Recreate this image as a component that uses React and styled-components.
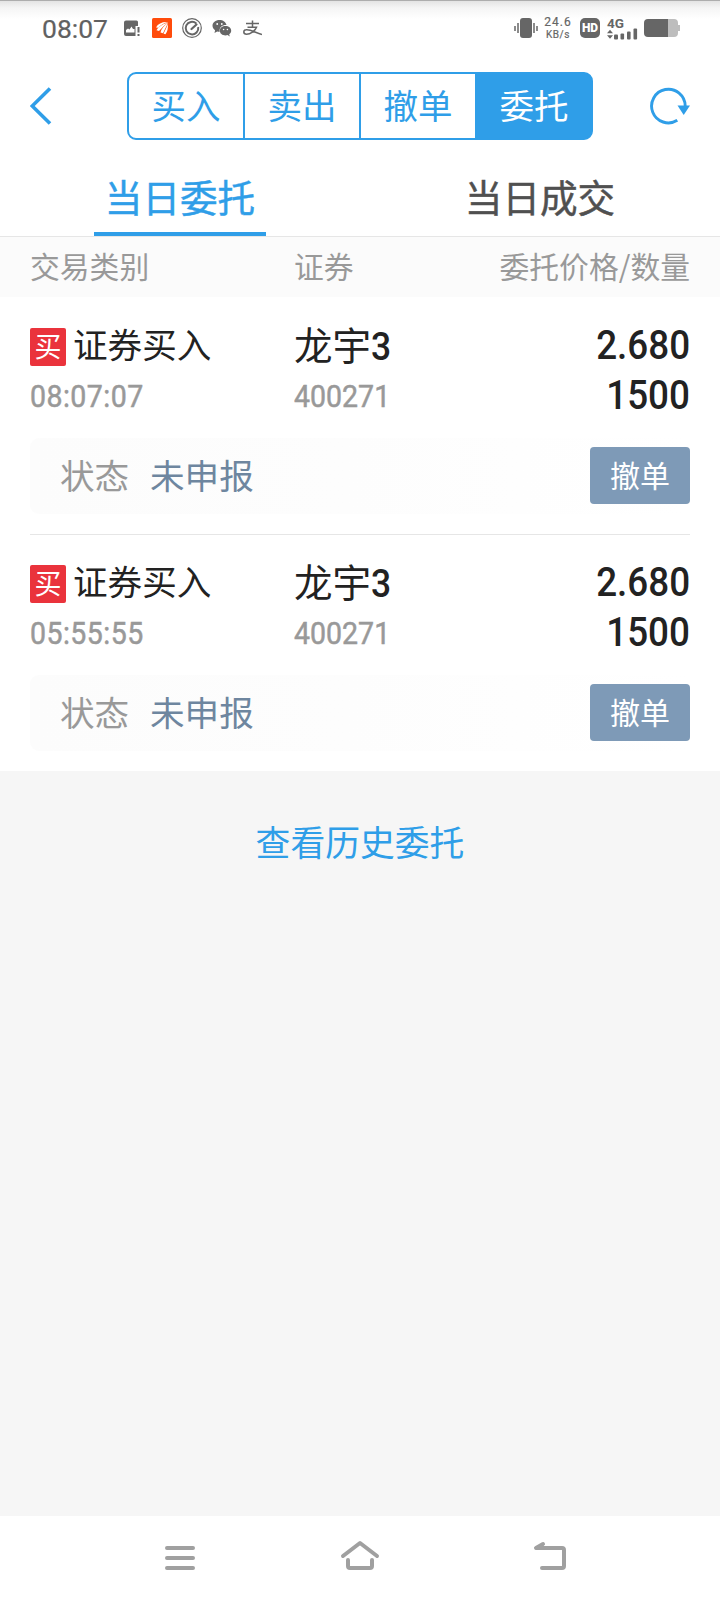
import React from "react";
import styled, { createGlobalStyle } from "styled-components";

const cjk = `"Noto Sans CJK SC", sans-serif`;
const num = `Roboto, "Noto Sans CJK SC", sans-serif`;
const blue = "#2f9ee8";

const Global = createGlobalStyle`
  * { box-sizing: border-box; }
  body { margin: 0; background: #f6f6f6; font-family: ${cjk}; }
  button { font: inherit; padding: 0; border: 0; background: none; color: inherit; }
`;

const Screen = styled.div`
  width: 720px;
  height: 1600px;
  display: flex;
  flex-direction: column;
  background: #f6f6f6;
  overflow: hidden;
`;

const StatusBar = styled.header`
  height: 56px;
  display: flex;
  align-items: flex-start;
  justify-content: space-between;
  padding: 15px 40px 0 42px;
  border-top: 1px solid #adadad;
  background: linear-gradient(#e4e4e4, #f5f5f5 7px, #fff 18px);
`;

const StatusGroup = styled.div`
  display: flex;
  align-items: center;
  height: 24px;
  svg { display: block; flex: none; }
`;

const Clock = styled.span`
  width: 70px;
  padding-top: 2px;
  font: 400 26.5px/24px ${num};
  -webkit-text-stroke: 0.2px #616161;
  color: #616161;
  white-space: nowrap;
`;

const LeftIcons = styled(StatusGroup)`
  gap: 10px;
`;

const Speed = styled.span`
  width: 28px;
  height: 24px;
  margin: 0 8px 0 6px;
  display: flex;
  flex-direction: column;
  align-items: center;
  color: #666;
  font: 400 10px/12px ${num};
  -webkit-text-stroke: 0.2px #666;
`;

const SpeedValue = styled.span`
  font-size: 12px;
  line-height: 13px;
  letter-spacing: 1px;
`;

const SpeedUnit = styled.span`
  letter-spacing: 0.5px;
  line-height: 12px;
`;

const NavBar = styled.nav`
  height: 96px;
  display: flex;
  align-items: flex-start;
  justify-content: space-between;
  padding: 16px 30px 0;
  background: #fff;
`;

const IconButton = styled.button`
  width: 42px;
  height: 68px;
  display: flex;
  align-items: center;
  justify-content: ${(p) => p.$align};
`;

const Segments = styled.div`
  width: 466px;
  height: 68px;
  display: flex;
  border: 2px solid ${blue};
  border-radius: 9px;
  background: ${blue};
`;

const Segment = styled.button`
  flex: 1;
  margin-left: ${(p) => (p.$first ? 0 : 2)}px;
  padding-bottom: 4px;
  border-radius: ${(p) => (p.$first ? "7px 0 0 7px" : "0")};
  background: ${(p) => (p.$active ? "transparent" : "#fff")};
  color: ${(p) => (p.$active ? "#fff" : blue)};
  font-size: 34.5px;
  line-height: 60px;
`;

const Tabs = styled.div`
  height: 85px;
  display: flex;
  background: #fff;
  border-bottom: 1px solid #e6e6e6;
`;

const TabCell = styled.div`
  flex: 1;
  display: flex;
  justify-content: center;
`;

const Tab = styled.button`
  width: 172px;
  height: 84px;
  padding-top: 7px;
  border-bottom: 4px solid ${(p) => (p.$active ? blue : "transparent")};
  color: ${(p) => (p.$active ? blue : "#505050")};
  -webkit-text-stroke: 0.45px ${(p) => (p.$active ? blue : "#505050")};
  font-size: 37.6px;
  line-height: 74px;
`;

const columns = "264px 1fr auto";

const TableHead = styled.div`
  height: 60px;
  display: grid;
  grid-template-columns: ${columns};
  padding: 0 30px;
  background: #fbfbfb;
  color: #999;
  font-size: 29.8px;
  line-height: 57px;
`;

const Orders = styled.main`
  padding: 0 30px;
  background: #fff;
`;

const Order = styled.article`
  height: 237px;
  padding-top: 22px;
  border-top: 1px solid ${(p) => (p.$first ? "transparent" : "#e6e6e6")};
`;

const OrderGrid = styled.div`
  height: 118px;
  display: grid;
  grid-template-columns: ${columns};
  grid-template-rows: 50px 50px;
`;

const Kind = styled.div`
  display: flex;
  align-items: flex-start;
  gap: 7px;
  color: #222;
  font-size: 34.6px;
  line-height: 46px;
`;

const Badge = styled.span`
  width: 36px;
  height: 38px;
  margin-top: 8px;
  border-radius: 2px;
  background: #ea333c;
  color: #fff;
  font-size: 27px;
  line-height: 36px;
  text-align: center;
`;

const Stock = styled.div`
  color: #222;
  font-size: 38.5px;
  line-height: 46px;
`;

const Digits = styled.span`
  display: inline-block;
  font-family: ${num};
  font-weight: 500;
  transform: scaleX(0.92);
  transform-origin: ${(p) => p.$origin || "left"} center;
`;

const Minor = styled.div`
  color: #999;
  font-size: 31px;
  line-height: 48px;
  ${Digits} {
    font-weight: 400;
    letter-spacing: ${(p) => p.$spacing || 0}px;
    -webkit-text-stroke: 0.5px #999;
  }
`;

const Amount = styled.div`
  color: #222;
  font-size: 40px;
  line-height: 45px;
  text-align: right;
`;

const StateBar = styled.div`
  height: 76px;
  display: flex;
  align-items: center;
  padding-left: 30px;
  border-radius: 9px;
  background: linear-gradient(90deg, #fcfcfc, #fdfdfd 48%, #fff);
  font-size: 34.6px;
  line-height: 70px;
`;

const StateLabel = styled.span`
  width: 90px;
  padding-bottom: 4px;
  color: #999;
`;

const StateValue = styled.span`
  flex: 1;
  padding-bottom: 4px;
  color: #6e869f;
`;

const CancelButton = styled.button`
  width: 100px;
  height: 57px;
  margin-bottom: 1px;
  padding-bottom: 3px;
  border-radius: 4px;
  background: #7e9ab7;
  color: #fff;
  font-size: 30px;
  line-height: 54px;
`;

const History = styled.div`
  flex: 1;
  padding-top: 44px;
  text-align: center;
  color: ${blue};
  font-size: 34.8px;
  line-height: 52px;
`;

const SystemNav = styled.footer`
  height: 84px;
  display: grid;
  grid-template-columns: 180px 190px 40px;
  padding: 21px 150px 0 160px;
  background: #fff;
  svg { display: block; }
`;

const ImageIcon = () => (
  <svg width="20" height="20" viewBox="0 0 20 20">
    <path fill="#666" d="M4 2.500h10.500a1.500 1.500 0 0 1 1.500 1.500v4h-2.500v10H4a2 2 0 0 1-2-2v-11.500a2 2 0 0 1 2-2z" />
    <path fill="#fff" d="M4 14.500V12l2-1.500 1.500 1 2-3 1.500 2.500h1.500v3.500z" />
    <path stroke="#666" strokeWidth="2" d="M16.500 9v5.500M16.500 16v2" />
  </svg>
);

const NewsIcon = () => (
  <svg width="20" height="20" viewBox="0 0 20 20">
    <rect width="20" height="20" rx="1.500" fill="#ff4b0b" />
    <g fill="#fff">
      <path d="M4 9.500Q7 3.500 16 4Q9 6 6.500 9.800z" />
      <path d="M4.500 12.200Q8 6.500 16 4.500Q11 8 7 13z" />
      <path d="M8.500 14.500Q10 8.500 16 5Q13.500 10 11 15.200z" />
      <path d="M11.500 15.800Q14.500 10 15.800 6Q16.500 12 13.500 16.300z" />
    </g>
  </svg>
);

const GaugeIcon = () => (
  <svg width="20" height="20" viewBox="0 0 20 20" fill="none" stroke="#666">
    <circle cx="10" cy="10" r="9.300" strokeWidth="1.200" />
    <path strokeWidth="2" d="M14.300 5.500A6.300 6.300 0 1 0 16.200 9" />
    <path strokeWidth="2.200" strokeLinecap="round" d="M9.500 11L14.500 6.500" />
  </svg>
);

const ChatIcon = () => (
  <svg width="20" height="20" viewBox="0 0 20 20">
    <path fill="#666" d="M7.500 2C3.500 2 .5 4.500.5 7.700c0 1.900 1 3.400 2.600 4.500L2.500 15l2.700-1.500c.8.2 1.500.3 2.500.3-.9-4.300 2.700-7 6.800-6.800C13.800 4 11 2 7.500 2z" />
    <path fill="#666" d="M13.500 8c-3.200 0-5.700 2-5.700 4.700 0 2.600 2.500 4.700 5.700 4.700.7 0 1.300-.1 2-.3l2.300 1.300-.6-2.100c1.300-.9 2-2.200 2-3.600C19.200 10 16.700 8 13.500 8z" />
    <g fill="#fff">
      <circle cx="5.200" cy="6" r=".9" />
      <circle cx="9.800" cy="6" r=".9" />
      <circle cx="11.600" cy="11.500" r=".8" />
      <circle cx="15.400" cy="11.500" r=".8" />
    </g>
  </svg>
);

const PayIcon = () => (
  <svg width="20" height="20" viewBox="0 0 20 20" fill="none" stroke="#666" strokeWidth="1.500">
    <path d="M4 5.500h13M10.500 2.500V9M5.500 9.300H14.500C13 13 8.500 16.300 4.500 16.300C1 16 1 12.300 4 11.800C8 11 13 14.500 20 16.500" />
  </svg>
);

const VibrateIcon = () => (
  <svg width="24" height="20" viewBox="0 0 24 20">
    <rect x="6" width="12" height="20" rx="3" fill="#666" />
    <path stroke="#666" strokeWidth="1.500" d="M1 8v5M4 5v10M20 5v10M23 8v5" />
  </svg>
);

const HdBadge = styled.span`
  width: 20px;
  height: 20px;
  border-radius: 5px;
  background: #666;
  color: #fff;
  font: 900 12px/20px ${num};
  text-align: center;
`;

const Network = styled.span`
  width: 32px;
  height: 22px;
  margin: 0 5px 0 7px;
  font: 700 13.5px/12px ${num};
  color: #666;
  svg { margin-top: -1px; }
`;

const SignalIcon = () => (
  <svg width="32" height="12" viewBox="0 0 32 12" fill="#666">
    <path d="M0 5.200L3 1.800l3 3.400zM0 7.300h6l-3 3.500z" />
    <rect x="7" y="6.500" width="4" height="5" rx="1" />
    <rect x="13.500" y="5.500" width="3.600" height="6" rx="1" />
    <rect x="20" y="3.500" width="3.600" height="8" rx="1" />
    <rect x="26.500" y=".5" width="3.600" height="11" rx="1" />
  </svg>
);

const BatteryIcon = () => (
  <svg width="36" height="18" viewBox="0 0 36 18">
    <path fill="#bdbdbd" d="M24 0h6a4 4 0 0 1 4 4v2h2v6h-2v2a4 4 0 0 1-4 4h-6z" />
    <path fill="#666" d="M4 0h20v18H4a4 4 0 0 1-4-4V4a4 4 0 0 1 4-4z" />
  </svg>
);

const BackIcon = () => (
  <svg width="22" height="38" viewBox="0 0 22 38" fill="none" stroke={blue} strokeWidth="3.600">
    <path d="M20 1.500L2.200 19L20 36.500" />
  </svg>
);

const RefreshIcon = () => (
  <svg width="42" height="40" viewBox="0 0 42 40">
    <path fill="none" stroke={blue} strokeWidth="2.900" d="M29.300 34.300A16.800 16.800 0 1 1 37.200 20" />
    <path fill={blue} d="M29.500 19.500H42L35.700 29z" />
  </svg>
);

const MenuIcon = () => (
  <svg width="40" height="40" viewBox="0 0 40 40" stroke="#a0a0a0" strokeWidth="4" strokeLinecap="round">
    <path d="M7 11h26M7 21h26M7 31h26" />
  </svg>
);

const HomeIcon = () => (
  <svg width="40" height="40" viewBox="0 0 40 40" fill="none" stroke="#a0a0a0" strokeWidth="4" strokeLinecap="round" strokeLinejoin="round">
    <path d="M3 19L20 6L37 19M8 23v6q0 2 2 2h20q2 0 2-2v-6" />
  </svg>
);

const ReturnIcon = () => (
  <svg width="40" height="40" viewBox="0 0 40 40" fill="none" stroke="#a0a0a0" strokeWidth="4" strokeLinecap="round" strokeLinejoin="round">
    <path d="M13 7L6 11H32q2 0 2 2v16q0 2-2 2H12" />
  </svg>
);

const orders = [
  { time: "08:07:07", name: "龙宇", suffix: "3", code: "400271", price: "2.680", qty: "1500" },
  { time: "05:55:55", name: "龙宇", suffix: "3", code: "400271", price: "2.680", qty: "1500" },
];

const segments = ["买入", "卖出", "撤单", "委托"];

export default function App() {
  return (
    <Screen>
      <Global />
      <StatusBar>
        <LeftIcons>
          <Clock>08:07</Clock>
          <ImageIcon />
          <NewsIcon />
          <GaugeIcon />
          <ChatIcon />
          <PayIcon />
        </LeftIcons>
        <StatusGroup>
          <VibrateIcon />
          <Speed>
            <SpeedValue>24.6</SpeedValue>
            <SpeedUnit>KB/s</SpeedUnit>
          </Speed>
          <HdBadge>HD</HdBadge>
          <Network>
            4G
            <SignalIcon />
          </Network>
          <BatteryIcon />
        </StatusGroup>
      </StatusBar>
      <NavBar>
        <IconButton $align="flex-start" aria-label="返回"><BackIcon /></IconButton>
        <Segments>
          {segments.map((label, i) => (
            <Segment key={label} $first={i === 0} $active={i === 3}>{label}</Segment>
          ))}
        </Segments>
        <IconButton $align="flex-end" aria-label="刷新"><RefreshIcon /></IconButton>
      </NavBar>
      <Tabs>
        <TabCell><Tab $active>当日委托</Tab></TabCell>
        <TabCell><Tab>当日成交</Tab></TabCell>
      </Tabs>
      <TableHead>
        <span>交易类别</span>
        <span>证券</span>
        <span>委托价格/数量</span>
      </TableHead>
      <Orders>
        {orders.map((o, i) => (
          <Order key={o.time} $first={i === 0}>
            <OrderGrid>
              <Kind><Badge>买</Badge>证券买入</Kind>
              <Stock>{o.name}<Digits>{o.suffix}</Digits></Stock>
              <Amount><Digits $origin="right">{o.price}</Digits></Amount>
              <Minor $spacing={0.5}><Digits>{o.time}</Digits></Minor>
              <Minor><Digits>{o.code}</Digits></Minor>
              <Amount><Digits $origin="right">{o.qty}</Digits></Amount>
            </OrderGrid>
            <StateBar>
              <StateLabel>状态</StateLabel>
              <StateValue>未申报</StateValue>
              <CancelButton>撤单</CancelButton>
            </StateBar>
          </Order>
        ))}
      </Orders>
      <History>查看历史委托</History>
      <SystemNav>
        <MenuIcon />
        <HomeIcon />
        <ReturnIcon />
      </SystemNav>
    </Screen>
  );
}
